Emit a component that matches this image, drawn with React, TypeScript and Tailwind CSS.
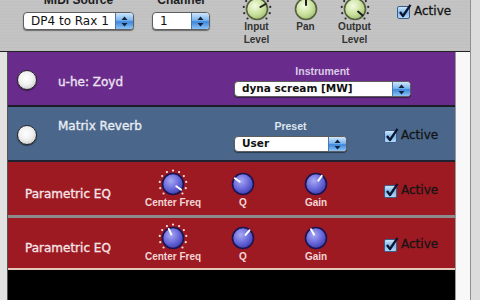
import { useId } from "react"

type KnobProps = { tone: "green" | "blue"; angle: number; dots?: boolean }

// rotary knob, angle measured clockwise from 12 o'clock
function Knob({ tone, angle, dots }: KnobProps) {
    const id = useId().replace(/:/g, "")
    const rad = ((angle - 90) * Math.PI) / 180
    const x1 = 15 + Math.cos(rad) * 4
    const y1 = 15 + Math.sin(rad) * 4
    const x2 = 15 + Math.cos(rad) * 10
    const y2 = 15 + Math.sin(rad) * 10
    const green = tone === "green"
    const dotList = dots ? Array.from({ length: 11 }, (_, i) => -135 + i * 27) : []
    return (
        <svg width="30" height="30" viewBox="0 0 30 30">
            <defs>
                <radialGradient id={`k${id}`} cx="40%" cy="35%" r="70%">
                    <stop offset="0%" stopColor={green ? "#f4fbe2" : "#a9a9f4"} />
                    <stop offset="60%" stopColor={green ? "#c8e09c" : "#6464d8"} />
                    <stop offset="100%" stopColor={green ? "#9cba6c" : "#3a3aa8"} />
                </radialGradient>
            </defs>
            {dotList.map((a) => {
                const r = ((a - 90) * Math.PI) / 180
                return (
                    <circle
                        key={a}
                        cx={15 + Math.cos(r) * 13.4}
                        cy={15 + Math.sin(r) * 13.4}
                        r="1.1"
                        fill={green ? "#2a2a2a" : "#f6dede"}
                    />
                )
            })}
            <circle cx="15" cy="15" r="10.5" fill={`url(#k${id})`} stroke={green ? "#56603e" : "#1c1450"} strokeWidth="1.6" />
            <line x1={x1} y1={y1} x2={x2} y2={y2} stroke={green ? "#1e1e1e" : "#ffffff"} strokeWidth="2" strokeLinecap="round" />
        </svg>
    )
}

function Arrows() {
    return (
        <svg width="7" height="11" viewBox="0 0 7 11">
            <path d="M3.5 0.5 L6.5 4 L0.5 4 Z" fill="#13233c" />
            <path d="M3.5 10.5 L6.5 7 L0.5 7 Z" fill="#13233c" />
        </svg>
    )
}

function Popup({ box, text, label }: { box: string; text: string; label: string }) {
    return (
        <div className={`flex overflow-hidden rounded-[4px] border border-[#5e5e5e] bg-white shadow-[0_1px_1px_rgba(0,0,0,0.45)] ${box}`}>
            <div className={`flex flex-1 items-center pl-[7px] text-[#111] ${text}`}>{label}</div>
            <div className="flex w-[18px] items-center justify-center border-l border-[#4f76a8] bg-[linear-gradient(#cfe6fb,#7db6ef_45%,#3d87dc_55%,#8cc4f6)]">
                <Arrows />
            </div>
        </div>
    )
}

function Check() {
    return (
        <svg width="15" height="15" viewBox="0 0 15 15">
            <defs>
                <linearGradient id="cb" x1="0" y1="0" x2="0" y2="1">
                    <stop offset="0%" stopColor="#d6ebfb" />
                    <stop offset="50%" stopColor="#7fb6ea" />
                    <stop offset="100%" stopColor="#b7dcfa" />
                </linearGradient>
            </defs>
            <rect x="0.5" y="2.5" width="12" height="12" rx="1.5" fill="url(#cb)" stroke="#3d5d88" />
            <path d="M3 8 L6 12 L13.5 0.8" fill="none" stroke="#0c1530" strokeWidth="2.3" strokeLinejoin="round" />
        </svg>
    )
}

function Active() {
    return (
        <div className="flex items-center gap-[2px]">
            <Check />
            <span className="text-[12px] text-[#141414] [-webkit-text-stroke-width:0.3px]">Active</span>
        </div>
    )
}

function Radio() {
    return (
        <div className="h-[20px] w-[20px] rounded-full border-[1.5px] border-[#2a2a2a] bg-[radial-gradient(circle_at_45%_40%,#ffffff_0%,#f0f0f0_45%,#b8b8b8_100%)] shadow-[0_1px_1px_rgba(0,0,0,0.5)]" />
    )
}

function KnobCol({ angle, dots, label, box }: { angle: number; dots?: boolean; label: string; box: string }) {
    return (
        <div className={`flex w-[60px] flex-col items-center ${box}`}>
            <Knob tone="blue" angle={angle} dots={dots} />
            <span className="-mt-[2px] whitespace-nowrap font-['Liberation_Sans',sans-serif] text-[10px] font-bold leading-[12px] text-[#f2d6d6]">
                {label}
            </span>
        </div>
    )
}

function EqPanel({ knobs, tall }: { knobs: number[]; tall?: boolean }) {
    return (
        <div className={`flex bg-[#9e1a22] pl-[17px] ${tall ? "h-[53px]" : "h-[50px]"}`}>
            <div
                className={`w-[118px] text-[12px] text-[#f4e4e6] [-webkit-text-stroke-width:0.35px] ${tall ? "mt-[23px]" : "mt-[21px]"}`}
            >
                Parametric EQ
            </div>
            <KnobCol angle={knobs[0]} dots label="Center Freq" box={tall ? "mt-[7px]" : "mt-[5px]"} />
            <KnobCol angle={knobs[1]} label="Q" box={tall ? "ml-[10px] mt-[7px]" : "ml-[10px] mt-[5px]"} />
            <KnobCol angle={knobs[2]} label="Gain" box={tall ? "ml-[13px] mt-[7px]" : "ml-[13px] mt-[5px]"} />
            <div className={tall ? "ml-[38px] mt-[19px]" : "ml-[38px] mt-[17px]"}>
                <Active />
            </div>
        </div>
    )
}

export default function App() {
    return (
        <div className="flex h-[300px] w-[480px] overflow-hidden bg-[#d6d6d6] font-['DejaVu_Sans',sans-serif]">
            <div className="flex w-[470px] flex-col">
                {/* brushed metal header */}
                <div className="flex h-[51px] items-start bg-[repeating-linear-gradient(180deg,#c9c9c9_0px,#bfbfbf_1px,#c6c6c6_2px,#bbbbbb_3px)] pl-[23px]">
                    <div className="-mt-[7px] flex w-[111px] flex-col items-center">
                        <span className="mb-[5px] font-['Liberation_Sans',sans-serif] text-[12px] font-bold leading-[14px] text-[#202020]">MIDI Source</span>
                        <Popup box="h-[18px] w-[111px]" text="text-[12px]" label="DP4 to Rax 1" />
                    </div>
                    <div className="-mt-[7px] ml-[18px] flex w-[58px] flex-col items-center">
                        <span className="mb-[5px] font-['Liberation_Sans',sans-serif] text-[12px] font-bold leading-[14px] text-[#202020]">Channel</span>
                        <Popup box="h-[18px] w-[58px]" text="text-[12px]" label="1" />
                    </div>
                    <div className="ml-[22px] flex">
                        {[
                            { a: 60, l: ["Input", "Level"] },
                            { a: 0, l: ["Pan"] },
                            { a: 130, l: ["Output", "Level"] },
                        ].map((k) => (
                            <div key={k.l[0]} className="-mt-[6px] flex w-[49px] flex-col items-center">
                                <Knob tone="green" angle={k.a} dots={k.l.length > 1} />
                                <div className="-mt-[3px] flex flex-col items-center font-['Liberation_Sans',sans-serif] text-[10px] font-bold leading-[12.5px] text-[#333]">
                                    {k.l.map((t) => (
                                        <span key={t}>{t}</span>
                                    ))}
                                </div>
                            </div>
                        ))}
                    </div>
                    <div className="ml-[18px] mt-[2px]">
                        <Active />
                    </div>
                </div>

                <div className="flex flex-1 border-t border-[#222]">
                    <div className="w-[8px] border-r border-[#555] bg-[#e2e2e2]" />
                    <div className="flex flex-1 flex-col">
                        {/* instrument */}
                        <div className="flex h-[53px] bg-[#6a2c8c] pl-[9px]">
                            <div className="mt-[18px]">
                                <Radio />
                            </div>
                            <div className="ml-[21px] mt-[21px] w-[176px] text-[12px] text-[#ece2f0] [-webkit-text-stroke-width:0.35px]">u-he: Zoyd</div>
                            <div className="mt-[13px] flex flex-col items-center">
                                <span className="mb-[4px] font-['Liberation_Sans',sans-serif] text-[10.5px] font-bold leading-[12px] text-[#dccbe6]">Instrument</span>
                                <Popup box="h-[16px] w-[177px]" text="text-[10.5px] font-bold" label="dyna scream [MW]" />
                            </div>
                        </div>
                        <div className="h-[2px] bg-[#1d1d28]" />
                        {/* effect */}
                        <div className="flex h-[53px] bg-[#4a678b] pl-[9px]">
                            <div className="mt-[18px]">
                                <Radio />
                            </div>
                            <div className="ml-[21px] mt-[10px] w-[176px] text-[12px] text-[#e9edf3] [-webkit-text-stroke-width:0.35px]">Matrix Reverb</div>
                            <div className="mt-[13px] flex flex-col items-center">
                                <span className="mb-[4px] font-['Liberation_Sans',sans-serif] text-[10.5px] font-bold leading-[12px] text-[#dde4ee]">Preset</span>
                                <Popup box="h-[16px] w-[113px]" text="text-[10.5px] font-bold" label="User" />
                            </div>
                            <div className="ml-[37px] mt-[19px]">
                                <Active />
                            </div>
                        </div>
                        <div className="h-[2px] bg-[#1d2230]" />
                        <EqPanel knobs={[125, -55, 35]} tall />
                        <div className="h-[3px] bg-[#8c8c8c]" />
                        <EqPanel knobs={[-25, 40, -30]} />
                        <div className="h-[2px] bg-[#e6c8b8]" />
                        <div className="flex-1 bg-black" />
                    </div>
                    <div className="w-[15px] border-l border-[#9a9a9a] bg-[#f8f8f8]" />
                </div>
            </div>
            <div className="flex-1 border-l border-[#8f8f8f] bg-[#dcdcdc]" />
        </div>
    )
}
